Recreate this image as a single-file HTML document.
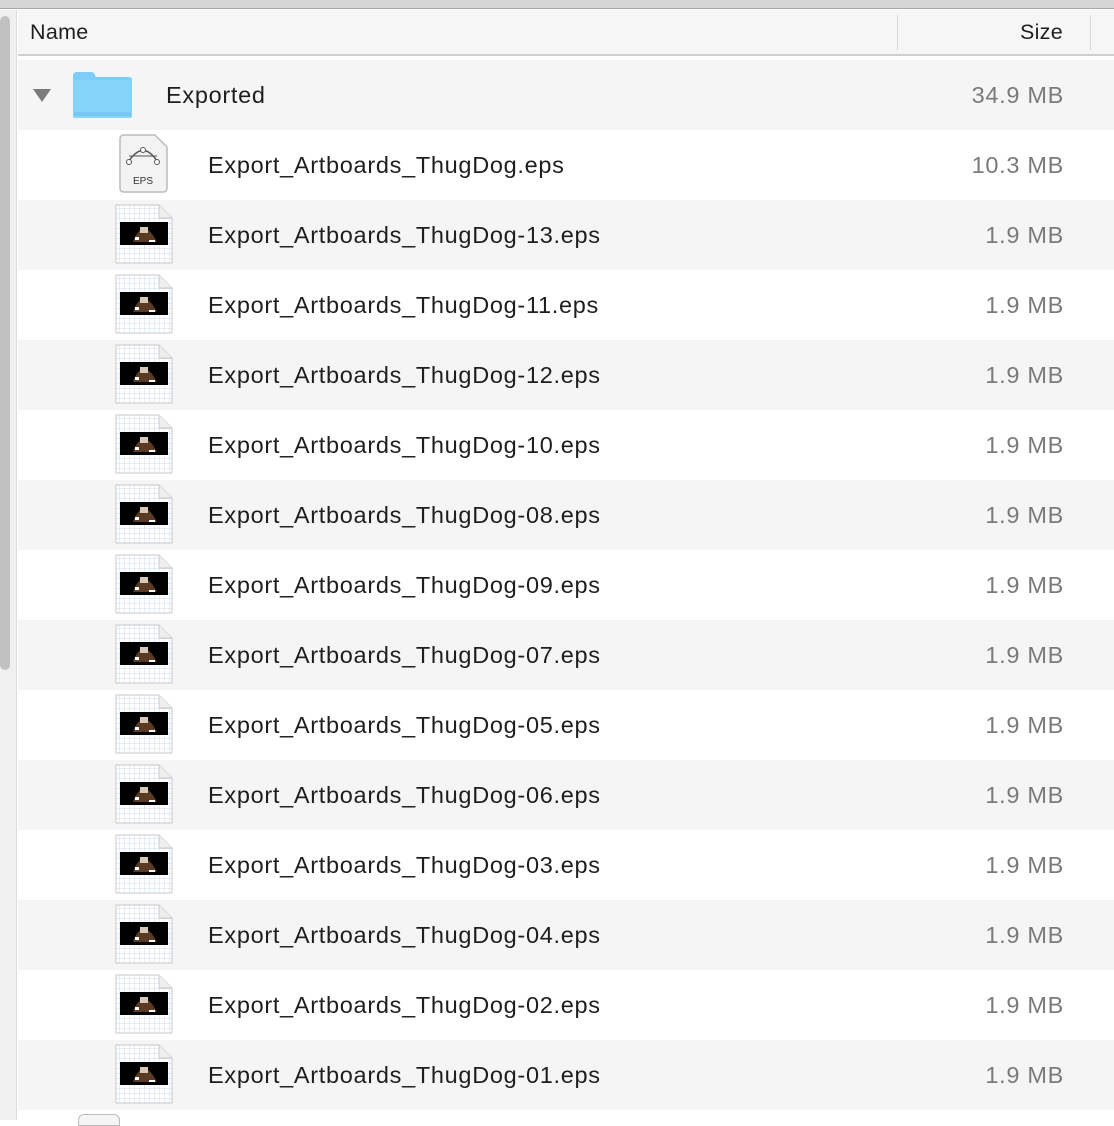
<!DOCTYPE html>
<html><head><meta charset="utf-8"><style>
*{margin:0;padding:0;box-sizing:border-box}
body{width:1114px;height:1120px;overflow:hidden;background:#fff;font-family:"Liberation Sans",sans-serif;position:relative}
.top{position:absolute;left:0;top:0;width:1114px;height:9px;background:#d5d5d5;border-bottom:1px solid #a8a8a8}
.sb{position:absolute;left:0;top:10px;width:17px;height:1110px;background:#f0f0f0;border-right:1px solid #dcdcdc}
.thumb{position:absolute;left:0;top:6px;width:10px;height:654px;background:#c1c1c1;border-radius:5px}
.hdr{position:absolute;left:18px;top:10px;width:1096px;height:46px;background:#f6f6f6;border-bottom:2px solid #cfcfcf;font-size:21.5px;color:#1e1e1e;letter-spacing:0.3px}
.hdr .n{position:absolute;left:12px;top:10px}
.hdr .s{position:absolute;right:51px;top:10px}
.hdr .d1{position:absolute;left:879px;top:5px;width:1px;height:35px;background:#d8d8d8}
.hdr .d2{position:absolute;left:1072px;top:5px;width:1px;height:35px;background:#d8d8d8}
.row{position:absolute;left:18px;width:1096px;height:70px;font-size:23.5px;color:#1e1e1e;letter-spacing:0.7px}
.g{background:#f5f5f5}
.row .t{position:absolute;left:190px;top:22px}
.row .sz{position:absolute;right:50px;top:22px;color:#7a7a7a}
.ic{position:absolute;left:97px;top:4px;width:58px;height:60px}
</style></head><body>
<div class="top"></div>
<div class="sb"><div class="thumb"></div></div>
<div class="hdr"><span class="n">Name</span><span class="s">Size</span><div class="d1"></div><div class="d2"></div></div>

<div class="row g" style="top:60px">
<svg style="position:absolute;left:14px;top:28px" width="20" height="16"><polygon points="1,1 19,1 10,14" fill="#7b7b7b"/></svg>
<svg style="position:absolute;left:53px;top:10px" width="63" height="50"><path d="M2 6 Q2 2 6 2 H20 Q23 2 24 5 L25 7 H58 Q61 7 61 10 V45 Q61 48 58 48 H5 Q2 48 2 45 Z" fill="#7ccdf7"/><rect x="2" y="10" width="59" height="38" rx="2" fill="#86d3fa"/><line x1="3" y1="43" x2="60" y2="43" stroke="#6cbcea"/><line x1="3" y1="45" x2="60" y2="45" stroke="#6cbcea"/></svg>
<span class="t" style="left:148px">Exported</span><span class="sz">34.9 MB</span></div>

<div class="row" style="top:130px">
<svg style="position:absolute;left:101px;top:4px" width="50" height="60"><path d="M5 1 H36 L48 13 V54 Q48 58 44 58 H5 Q1 58 1 54 V5 Q1 1 5 1 Z" fill="#f3f3f3" stroke="#bcbcbc" stroke-width="1.5"/><path d="M10 27 Q24 6 38 27" fill="none" stroke="#555" stroke-width="1.5"/><line x1="10" y1="22" x2="38" y2="22" stroke="#555" stroke-width="1"/><circle cx="24" cy="16" r="2.5" fill="#fff" stroke="#555"/><circle cx="10" cy="28" r="2.5" fill="#fff" stroke="#555"/><circle cx="38" cy="28" r="2.5" fill="#fff" stroke="#555"/><text x="24" y="50" font-size="10" text-anchor="middle" fill="#333" font-family="Liberation Sans" letter-spacing="0">EPS</text></svg>
<span class="t">Export_Artboards_ThugDog.eps</span><span class="sz">10.3 MB</span></div>

<svg width="0" height="0" style="position:absolute"><defs>
<pattern id="grid" width="5" height="5" patternUnits="userSpaceOnUse"><rect width="5" height="5" fill="#fff"/><path d="M5 0 V5 H0" fill="none" stroke="#cfdbe8" stroke-width="1"/></pattern>
<symbol id="th" viewBox="0 0 58 60"><path d="M1 1 H44 L57 14 V59 H1 Z" fill="url(#grid)" stroke="#c8c8c8"/><path d="M44 1 V14 H57" fill="#eee" stroke="#ccc"/><rect x="5" y="18" width="48" height="23" fill="#000"/><path d="M18 38 Q22 26 29 24 Q36 26 42 38 Z" fill="#5a3a22"/><rect x="25" y="23" width="8" height="6" fill="#d8c8b8"/><rect x="20" y="33" width="4" height="3" fill="#fff"/><rect x="34" y="36" width="6" height="2" fill="#fff"/></symbol></defs></svg>

<div class="row g" style="top:200px"><svg class="ic"><use href="#th"/></svg><span class="t">Export_Artboards_ThugDog-13.eps</span><span class="sz">1.9 MB</span></div>
<div class="row" style="top:270px"><svg class="ic"><use href="#th"/></svg><span class="t">Export_Artboards_ThugDog-11.eps</span><span class="sz">1.9 MB</span></div>
<div class="row g" style="top:340px"><svg class="ic"><use href="#th"/></svg><span class="t">Export_Artboards_ThugDog-12.eps</span><span class="sz">1.9 MB</span></div>
<div class="row" style="top:410px"><svg class="ic"><use href="#th"/></svg><span class="t">Export_Artboards_ThugDog-10.eps</span><span class="sz">1.9 MB</span></div>
<div class="row g" style="top:480px"><svg class="ic"><use href="#th"/></svg><span class="t">Export_Artboards_ThugDog-08.eps</span><span class="sz">1.9 MB</span></div>
<div class="row" style="top:550px"><svg class="ic"><use href="#th"/></svg><span class="t">Export_Artboards_ThugDog-09.eps</span><span class="sz">1.9 MB</span></div>
<div class="row g" style="top:620px"><svg class="ic"><use href="#th"/></svg><span class="t">Export_Artboards_ThugDog-07.eps</span><span class="sz">1.9 MB</span></div>
<div class="row" style="top:690px"><svg class="ic"><use href="#th"/></svg><span class="t">Export_Artboards_ThugDog-05.eps</span><span class="sz">1.9 MB</span></div>
<div class="row g" style="top:760px"><svg class="ic"><use href="#th"/></svg><span class="t">Export_Artboards_ThugDog-06.eps</span><span class="sz">1.9 MB</span></div>
<div class="row" style="top:830px"><svg class="ic"><use href="#th"/></svg><span class="t">Export_Artboards_ThugDog-03.eps</span><span class="sz">1.9 MB</span></div>
<div class="row g" style="top:900px"><svg class="ic"><use href="#th"/></svg><span class="t">Export_Artboards_ThugDog-04.eps</span><span class="sz">1.9 MB</span></div>
<div class="row" style="top:970px"><svg class="ic"><use href="#th"/></svg><span class="t">Export_Artboards_ThugDog-02.eps</span><span class="sz">1.9 MB</span></div>
<div class="row g" style="top:1040px"><svg class="ic"><use href="#th"/></svg><span class="t">Export_Artboards_ThugDog-01.eps</span><span class="sz">1.9 MB</span></div>
<div style="position:absolute;left:78px;top:1114px;width:42px;height:12px;border:1.5px solid #bbb;border-radius:6px 6px 0 0;background:#f5f5f5"></div>
</body></html>
